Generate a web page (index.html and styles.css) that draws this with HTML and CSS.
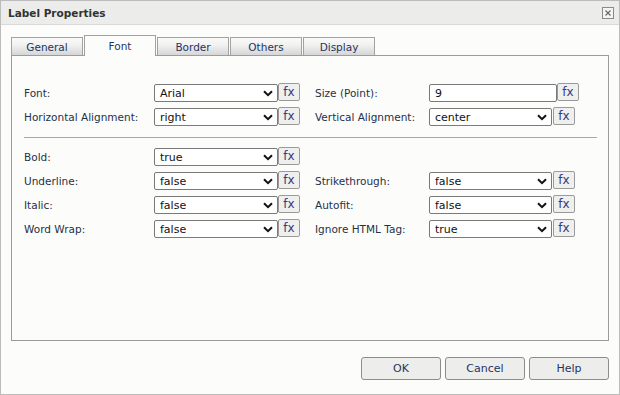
FILE: index.html
```html
<!DOCTYPE html>
<html>
<head>
<meta charset="utf-8">
<link rel="stylesheet" href="styles.css">
</head>
<body>
<div class="dialog">
  <div class="titlebar">
    <span class="title">Label Properties</span>
    <span class="close"><svg width="12" height="12" viewBox="0 0 12 12"><rect x="0.5" y="0.5" width="11" height="11" fill="#f4f4f2" stroke="#8a8a8a"/><path d="M3.5 3.5 L8.5 8.5 M8.5 3.5 L3.5 8.5" stroke="#666" stroke-width="1.1"/></svg></span>
  </div>
  <div class="content">
    <div class="tabs">
      <div class="tab">General</div>
      <div class="tab active">Font</div>
      <div class="tab">Border</div>
      <div class="tab">Others</div>
      <div class="tab">Display</div>
    </div>
    <div class="panel">
      <div class="row">
        <div class="cell left">
          <span class="label">Font:</span>
          <div class="select"><span>Arial</span><svg class="chev" width="10" height="7" viewBox="0 0 10 7"><path d="M1 1.2 L5 5.2 L9 1.2" fill="none" stroke="#111" stroke-width="2"/></svg></div>
          <span class="fx">fx</span>
        </div>
        <div class="cell right">
          <span class="label rlabel">Size (Point):</span>
          <div class="input">9</div>
          <span class="fx">fx</span>
        </div>
      </div>
      <div class="row">
        <div class="cell left">
          <span class="label">Horizontal Alignment:</span>
          <div class="select"><span>right</span><svg class="chev" width="10" height="7" viewBox="0 0 10 7"><path d="M1 1.2 L5 5.2 L9 1.2" fill="none" stroke="#111" stroke-width="2"/></svg></div>
          <span class="fx">fx</span>
        </div>
        <div class="cell right">
          <span class="label rlabel">Vertical Alignment:</span>
          <div class="select rsel"><span>center</span><svg class="chev" width="10" height="7" viewBox="0 0 10 7"><path d="M1 1.2 L5 5.2 L9 1.2" fill="none" stroke="#111" stroke-width="2"/></svg></div>
          <span class="fx rfx">fx</span>
        </div>
      </div>
      <div class="sep"></div>
      <div class="row">
        <div class="cell left">
          <span class="label">Bold:</span>
          <div class="select"><span>true</span><svg class="chev" width="10" height="7" viewBox="0 0 10 7"><path d="M1 1.2 L5 5.2 L9 1.2" fill="none" stroke="#111" stroke-width="2"/></svg></div>
          <span class="fx">fx</span>
        </div>
      </div>
      <div class="row">
        <div class="cell left">
          <span class="label">Underline:</span>
          <div class="select"><span>false</span><svg class="chev" width="10" height="7" viewBox="0 0 10 7"><path d="M1 1.2 L5 5.2 L9 1.2" fill="none" stroke="#111" stroke-width="2"/></svg></div>
          <span class="fx">fx</span>
        </div>
        <div class="cell right">
          <span class="label rlabel">Strikethrough:</span>
          <div class="select rsel"><span>false</span><svg class="chev" width="10" height="7" viewBox="0 0 10 7"><path d="M1 1.2 L5 5.2 L9 1.2" fill="none" stroke="#111" stroke-width="2"/></svg></div>
          <span class="fx rfx">fx</span>
        </div>
      </div>
      <div class="row">
        <div class="cell left">
          <span class="label">Italic:</span>
          <div class="select"><span>false</span><svg class="chev" width="10" height="7" viewBox="0 0 10 7"><path d="M1 1.2 L5 5.2 L9 1.2" fill="none" stroke="#111" stroke-width="2"/></svg></div>
          <span class="fx">fx</span>
        </div>
        <div class="cell right">
          <span class="label rlabel">Autofit:</span>
          <div class="select rsel"><span>false</span><svg class="chev" width="10" height="7" viewBox="0 0 10 7"><path d="M1 1.2 L5 5.2 L9 1.2" fill="none" stroke="#111" stroke-width="2"/></svg></div>
          <span class="fx rfx">fx</span>
        </div>
      </div>
      <div class="row">
        <div class="cell left">
          <span class="label">Word Wrap:</span>
          <div class="select"><span>false</span><svg class="chev" width="10" height="7" viewBox="0 0 10 7"><path d="M1 1.2 L5 5.2 L9 1.2" fill="none" stroke="#111" stroke-width="2"/></svg></div>
          <span class="fx">fx</span>
        </div>
        <div class="cell right">
          <span class="label rlabel">Ignore HTML Tag:</span>
          <div class="select rsel"><span>true</span><svg class="chev" width="10" height="7" viewBox="0 0 10 7"><path d="M1 1.2 L5 5.2 L9 1.2" fill="none" stroke="#111" stroke-width="2"/></svg></div>
          <span class="fx rfx">fx</span>
        </div>
      </div>
    </div>
    <div class="buttons">
      <span class="btn">OK</span>
      <span class="btn">Cancel</span>
      <span class="btn">Help</span>
    </div>
  </div>
</div>
</body>
</html>
```
FILE: styles.css
```css
* { box-sizing: border-box; }
html, body { margin: 0; padding: 0; background: #fcfdfb; }
body { font-family: "DejaVu Sans", Verdana, sans-serif; font-size: 10.5px; color: #263048; }
.dialog {
  width: 620px; height: 395px;
  border: 1px solid #bcbcbc;
  background: #fcfdfb;
  display: flex; flex-direction: column;
}
.titlebar {
  height: 24px; flex: none;
  background: #ececea;
  border-bottom: 1px solid #d9d9d7;
  display: flex; align-items: center; justify-content: space-between;
  padding: 0 5px 0 7px;
}
.title { font-weight: bold; color: #333; font-size: 10.5px; }
.close { display: flex; }
.content { padding: 10px 10px 0 10px; display: flex; flex-direction: column; }
.tabs { display: flex; align-items: flex-end; gap: 1px; height: 20px; }
.tab {
  width: 72px; height: 18px;
  border: 1px solid #a2a2a2; border-bottom: none;
  background: linear-gradient(#fafafa, #f2f2f2 40%, #d6d6d6);
  display: flex; align-items: center; justify-content: center;
  color: #1f3463; padding-top: 1px;
}
.tab.active {
  height: 21px; margin-bottom: -1px; background: #fcfdfb;
  position: relative; z-index: 1; padding-bottom: 2px;
}
.panel {
  height: 286px;
  border: 1px solid #9c9c9c;
  padding: 27px 11px 0 12px;
}
.row { display: flex; height: 24px; }
.cell { display: flex; align-items: flex-start; }
.cell.left { width: 291px; }
.label { width: 130px; padding-top: 4px; white-space: nowrap; }
.rlabel { width: 114px; }
.select, .input {
  width: 124px; height: 18px; margin-top: 1px;
  background: #fff; border: 1px solid #7a7a7a; border-radius: 2px;
  display: flex; align-items: center; justify-content: space-between;
  padding: 0 4px 0 5px; color: #111; font-size: 11px;
}
.select.rsel { width: 123px; }
.input { width: 128px; justify-content: flex-start; }
.chev { flex: none; }
.fx {
  width: 22px; height: 18px;
  background: #efefed; border: 1px solid #9a9a9a; border-radius: 2px;
  display: flex; align-items: center; justify-content: center;
  color: #363a86; font-size: 12px; padding-bottom: 1px;
}
.fx.rfx { margin-left: 1px; }
.sep { height: 1px; background: #a8a8a8; margin: 6px 0 9px 0; }
.buttons { display: flex; justify-content: flex-end; gap: 4px; margin-top: 16px; }
.btn {
  width: 80px; height: 23px;
  background: #ededeb; border: 1px solid #8c8c8c; border-radius: 3px;
  display: flex; align-items: center; justify-content: center;
  color: #1f3463; font-size: 11px;
}
```
